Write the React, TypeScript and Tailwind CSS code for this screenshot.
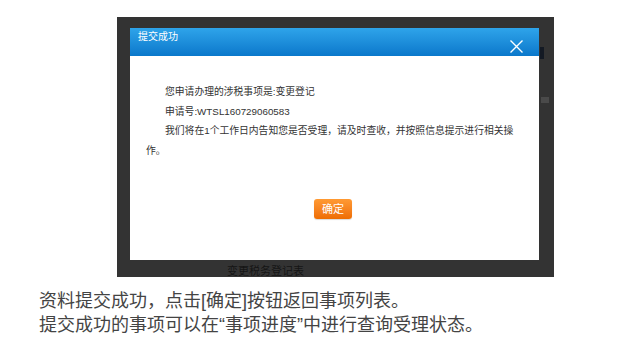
export default function App() {
  return (
    <div className="w-[642px] h-[346px] overflow-hidden bg-white pt-[17px] font-['Liberation_Sans','Noto_Sans_CJK_SC',sans-serif]">
      <div className="ml-[117px] flex h-[260px] w-[437px] flex-col bg-[#333333] pl-[13px] pt-[11px]">
        <div className="flex">
          <div className="flex h-[232px] w-[409px] flex-col bg-white">
            <div className="flex h-[28px] justify-between bg-gradient-to-b from-[#2ea4ea] to-[#0a78cb]">
              <span className="pl-[8px] pt-[2px] text-[10px] leading-[14px] text-white">
                提交成功
              </span>
              <svg
                className="mb-[3px] mr-[16px] self-end"
                width="13"
                height="13"
                viewBox="0 0 13 13"
                fill="none"
                stroke="white"
                strokeWidth="1.4"
              >
                <path d="M0.5 0.5 L12.5 12.5 M12.5 0.5 L0.5 12.5" />
              </svg>
            </div>

            <div className="w-[390px] pl-[16px] pt-[26px] text-[9.8px] leading-[19.5px] text-[#333]">
              <p className="indent-[19px]">您申请办理的涉税事项是:变更登记</p>
              <p className="indent-[19px]">申请号:WTSL160729060583</p>
              <p className="w-[372px] indent-[19px]">
                我们将在1个工作日内告知您是否受理，请及时查收，并按照信息提示进行相关操作。
              </p>
            </div>

            <button className="ml-[184px] mt-[39px] h-[20px] w-[38px] rounded-[3px] bg-gradient-to-b from-[#ff9a33] to-[#ee6d00] text-[11px] leading-[20px] text-white shadow-[0_1px_1px_rgba(0,0,0,0.15)]">
              确定
            </button>
          </div>

          <div className="flex w-[15px] flex-col">
            <div className="ml-[1px] mt-[19px] h-[12px] w-[4px] bg-[#141a24]" />
            <div className="ml-[2px] mt-[38px] h-[6px] w-[8px] bg-[#4a4a4a]" />
          </div>
        </div>

        <span className="ml-[97px] mt-[4px] text-[11px] leading-[14px] text-[#151515]">
          变更税务登记表
        </span>
      </div>

      <div className="mt-[12px] pl-[39px] text-[18px] leading-[24px] text-[#444]">
        <p>资料提交成功，点击[确定]按钮返回事项列表。</p>
        <p>提交成功的事项可以在“事项进度”中进行查询受理状态。</p>
      </div>
    </div>
  );
}
